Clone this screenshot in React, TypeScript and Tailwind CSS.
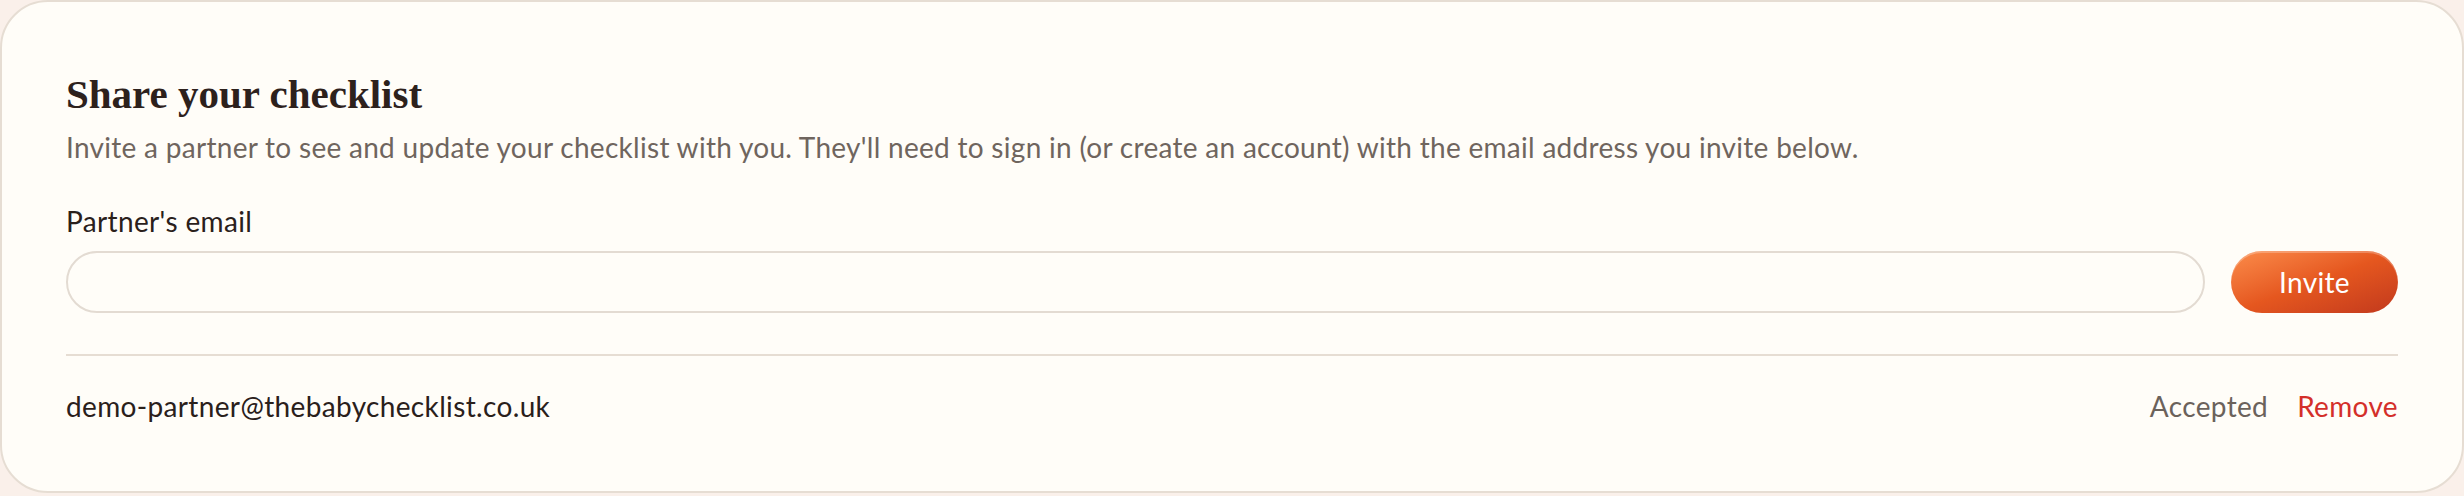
import { useState } from 'react';

const sans = "font-['Lato','Noto_Sans',sans-serif] tracking-[0.35px]";

export default function App() {
  const [email, setEmail] = useState('');

  return (
    <div className="min-h-screen w-full bg-[#faf0ea]">
      <section className="rounded-[48px] border-2 border-[#e6ddd3] bg-[#fffdf8] px-16 pt-[68px] pb-[65px]">
        <h2 className="font-['Liberation_Serif','Times_New_Roman',serif] text-[41px] font-bold leading-[48px] text-[#2d211c]">
          Share your checklist
        </h2>
        <p className={`${sans} mt-[9px] text-[28px] leading-[40px] !tracking-[0.29px] text-[#6f655e]`}>
          Invite a partner to see and update your checklist with you. They'll need to sign in (or create an account) with the email address you invite below.
        </p>

        <label className={`${sans} mt-[34px] block text-[28px] leading-[40px] text-[#2a201b]`}>
          Partner's email
        </label>
        <div className="mt-[10px] flex items-center gap-[26px]">
          <input
            type="email"
            value={email}
            onChange={(e) => setEmail(e.target.value)}
            className={`${sans} h-[62px] flex-1 rounded-full border-2 border-[#e3dbd2] bg-[#fffdf8] px-6 text-[28px] text-[#2a201b] outline-none`}
          />
          <button
            className={`${sans} h-[62px] w-[167px] rounded-full bg-gradient-to-br from-[#fb8c4a] via-[#e5571f] to-[#c2391d] text-[28px] text-white shadow-[inset_0_2px_0_rgba(255,255,255,0.25)]`}
          >
            Invite
          </button>
        </div>

        <div className="mt-[41px] border-t-2 border-[#e6ddd3]" />

        <div className={`${sans} flex items-center justify-between pt-[30px] text-[28px] leading-[40px]`}>
          <span className="text-[#2a201b]">demo-partner@thebabychecklist.co.uk</span>
          <div className="flex items-center gap-[29px]">
            <span className="text-[#6b625b]">Accepted</span>
            <button className="text-[#d42f2a]">Remove</button>
          </div>
        </div>
      </section>
    </div>
  );
}
